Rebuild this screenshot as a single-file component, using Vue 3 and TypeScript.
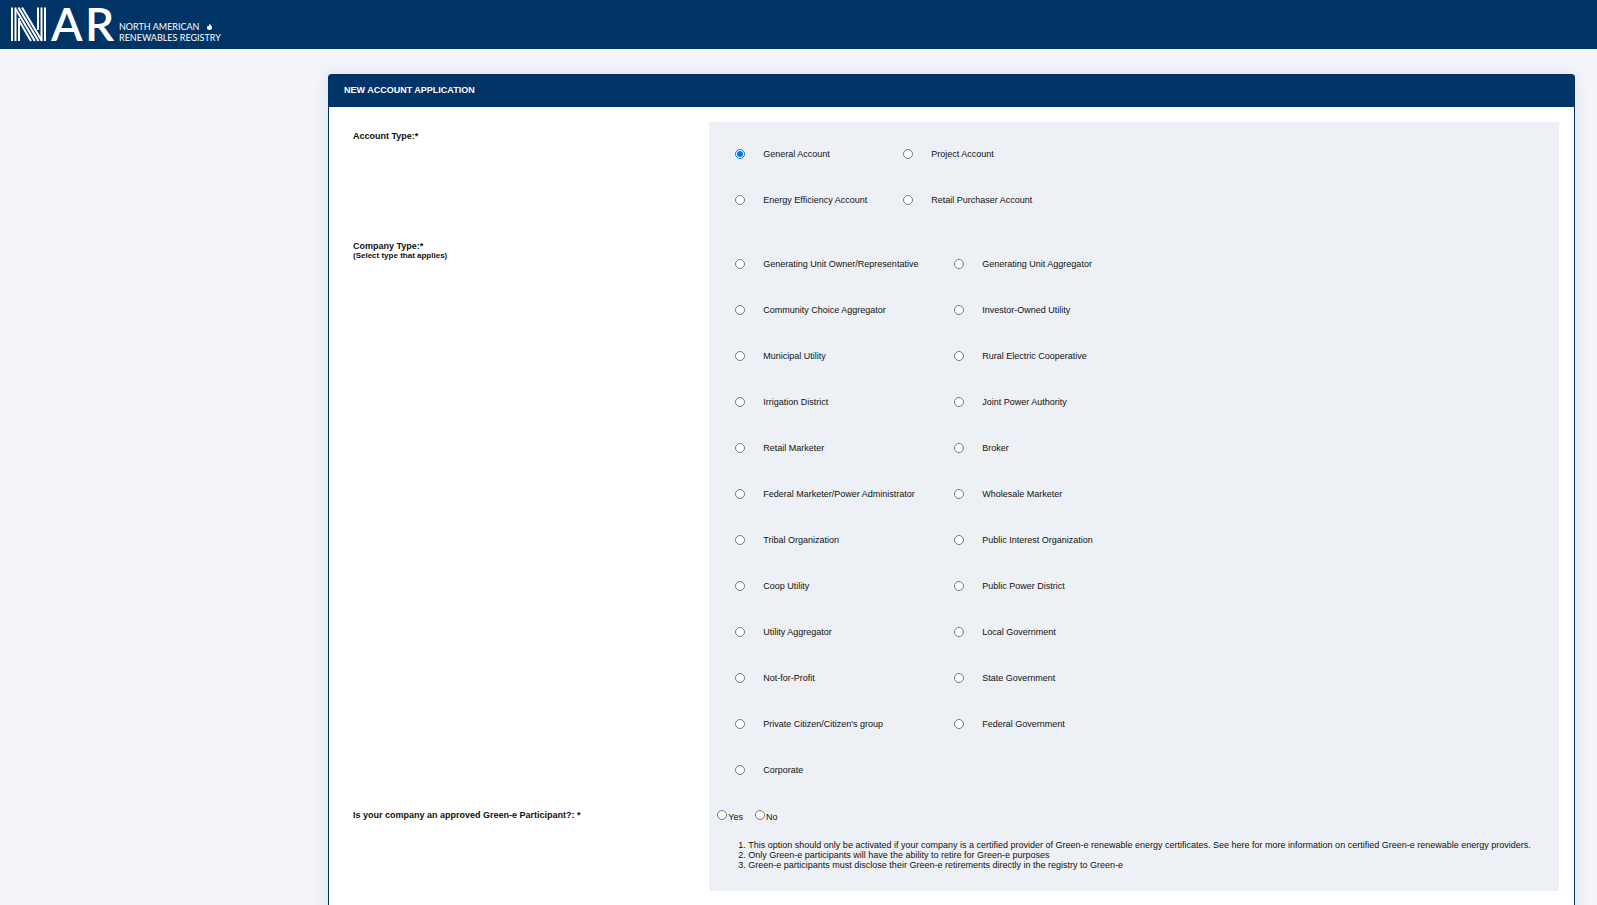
<script setup lang="ts">
import { ref } from 'vue'

const accountTypes: string[] = [
  'General Account',
  'Project Account',
  'Energy Efficiency Account',
  'Retail Purchaser Account',
]

const companyTypes: string[] = [
  'Generating Unit Owner/Representative',
  'Generating Unit Aggregator',
  'Community Choice Aggregator',
  'Investor-Owned Utility',
  'Municipal Utility',
  'Rural Electric Cooperative',
  'Irrigation District',
  'Joint Power Authority',
  'Retail Marketer',
  'Broker',
  'Federal Marketer/Power Administrator',
  'Wholesale Marketer',
  'Tribal Organization',
  'Public Interest Organization',
  'Coop Utility',
  'Public Power District',
  'Utility Aggregator',
  'Local Government',
  'Not-for-Profit',
  'State Government',
  "Private Citizen/Citizen's group",
  'Federal Government',
  'Corporate',
]

const accountType = ref('General Account')
const companyType = ref('')
const greenE = ref('')
</script>

<template>
  <div class="page">
    <header class="topbar">
      <svg class="logo" width="224" height="49" viewBox="0 0 224 49" role="img" aria-label="North American Renewables Registry">
        <g fill="none" stroke="#fff" stroke-width="2">
          <path d="M12 7.5V41M15.500 7.500V41M19 18V41" />
          <path d="M38 7.500V30M41.500 7.500V41M45 7.500V41" />
          <path d="M22 7.500L42 41M18.500 7.500L38.500 41M16 9.500L34.800 41M19 20.500L31 41" />
        </g>
        <text class="mark" x="51" y="41">A</text>
        <text class="mark" x="85" y="41">R</text>
        <text class="tagline" x="119" y="30">NORTH AMERICAN</text>
        <text class="tagline" x="119" y="41">RENEWABLES REGISTRY</text>
        <path d="M209.500 23.500c.6 1.500 2.500 2.200 2.500 4.100a2.500 2.500 0 0 1-5 0c0-1 .5-1.500 1-1.900.2.500.5.600.7.600.6-.8.500-1.800.8-2.800z" fill="#fff" />
      </svg>
    </header>

    <main class="content">
      <section class="panel">
        <h1 class="panel-title">NEW ACCOUNT APPLICATION</h1>
        <form class="form">
          <div id="account-label" class="label">Account Type:*</div>
          <div class="field account" role="radiogroup" aria-labelledby="account-label">
            <label v-for="name in accountTypes" :key="name" class="option">
              <input v-model="accountType" type="radio" name="account" :value="name" />
              <span>{{ name }}</span>
            </label>
          </div>

          <div id="company-label" class="label">
            Company Type:*
            <small>(Select type that applies)</small>
          </div>
          <div class="field company" role="radiogroup" aria-labelledby="company-label">
            <label v-for="name in companyTypes" :key="name" class="option">
              <input v-model="companyType" type="radio" name="company" :value="name" />
              <span>{{ name }}</span>
            </label>
          </div>

          <div id="green-label" class="label">Is your company an approved Green-e Participant?: *</div>
          <div class="field green">
            <div class="answers" role="radiogroup" aria-labelledby="green-label">
              <label><input v-model="greenE" type="radio" name="green" value="yes" /><span>Yes</span></label>
              <label><input v-model="greenE" type="radio" name="green" value="no" /><span>No</span></label>
            </div>
            <ol class="notes">
              <li>This option should only be activated if your company is a certified provider of Green-e renewable energy certificates. See <a href="#">here</a> for more information on certified Green-e renewable energy providers.</li>
              <li>Only Green-e participants will have the ability to retire for Green-e purposes</li>
              <li>Green-e participants must disclose their Green-e retirements directly in the registry to Green-e</li>
            </ol>
          </div>
        </form>
      </section>
    </main>
  </div>
</template>

<style>
html,
body {
  margin: 0;
  background: #f4f5fa;
}
html {
  overflow: hidden;
}
</style>

<style scoped>
.page {
  box-sizing: border-box;
  height: 100vh;
  overflow: hidden;
  font-family: "Liberation Sans", Arial, sans-serif;
  font-size: 9px;
  line-height: 10px;
  color: #111;
}
.topbar {
  height: 49px;
  background: #003366;
}
.logo {
  display: block;
  overflow: visible;
}
.mark {
  font: 600 46px Lato, sans-serif;
  fill: #fff;
}
.tagline {
  font: 400 9px Lato, sans-serif;
  fill: #fff;
}
.content {
  padding: 25px 22px 0 328px;
}
.panel {
  min-height: 100vh;
  box-sizing: border-box;
  border: 1px solid #003366;
  border-radius: 3px;
  background: #fff;
  box-shadow: 0 0 16px rgba(40, 45, 80, 0.1);
}
.panel-title {
  margin: 0;
  padding: 9px 15px 11px;
  font-size: 9px;
  font-weight: 700;
  line-height: 12px;
  color: #fff;
  background: #003366;
}
.form {
  display: grid;
  grid-template-columns: 13fr 31fr;
  padding: 15px 15px 15px 24px;
}
.label {
  padding-top: 9px;
  font-weight: 700;
}
.label small {
  display: block;
  font-size: 8px;
}
.field {
  background: #edf0f5;
  padding-left: 26px;
}
.account,
.company {
  display: grid;
  grid-auto-rows: 46px;
  align-items: center;
}
.account {
  grid-template-columns: 168px 1fr;
  padding-top: 9px;
  padding-bottom: 9px;
}
.company {
  grid-template-columns: 219px 1fr;
  padding-top: 9px;
  padding-bottom: 8px;
}
.option {
  display: flex;
  align-items: center;
  gap: 18px;
}
.option input,
.answers input {
  width: 10px;
  height: 10px;
  margin: 0;
}
.answers {
  display: flex;
  gap: 12px;
}
.answers label {
  display: flex;
  gap: 1px;
}
.answers span {
  padding-top: 2px;
}
.green {
  padding: 9px 8px 21px;
}
.notes {
  margin: 18px 0 0;
  padding-left: 31px;
}
.notes a {
  color: inherit;
  text-decoration: none;
}
</style>
